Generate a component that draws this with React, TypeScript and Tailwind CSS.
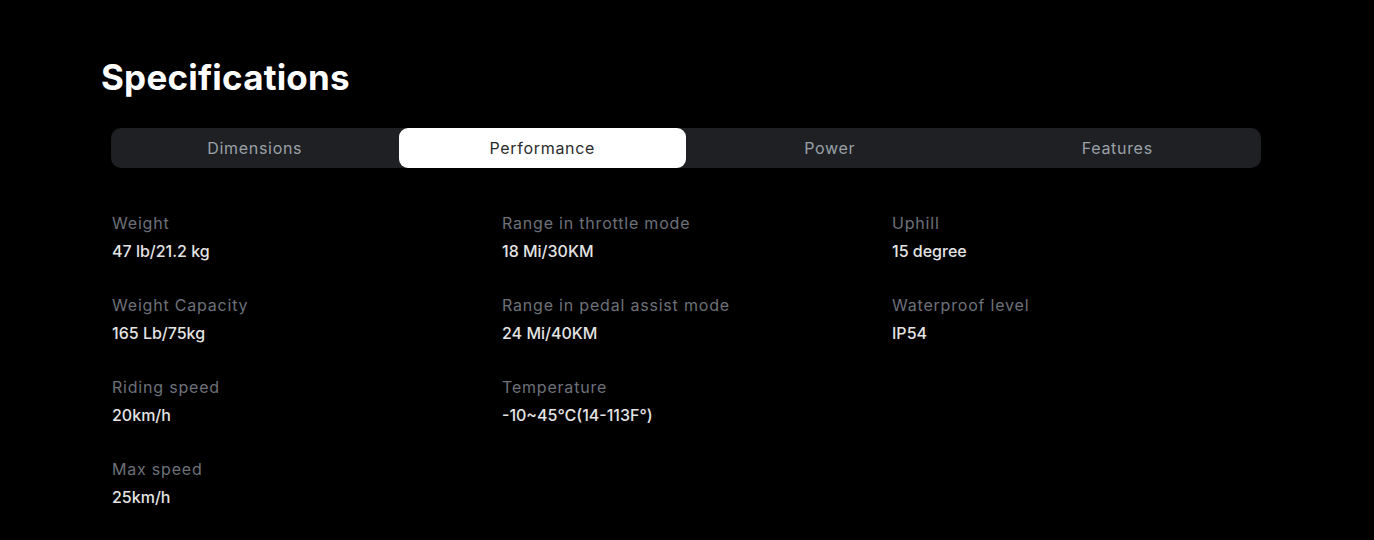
import { useState } from "react";

const tabs = ["Dimensions", "Performance", "Power", "Features"];

const columns = [
  [
    { label: "Weight", value: "47 lb/21.2 kg" },
    { label: "Weight Capacity", value: "165 Lb/75kg" },
    { label: "Riding speed", value: "20km/h" },
    { label: "Max speed", value: "25km/h" },
  ],
  [
    { label: "Range in throttle mode", value: "18 Mi/30KM" },
    { label: "Range in pedal assist mode", value: "24 Mi/40KM" },
    { label: "Temperature", value: "-10~45℃(14-113F°)" },
  ],
  [
    { label: "Uphill", value: "15 degree" },
    { label: "Waterproof level", value: "IP54" },
  ],
];

export default function App() {
  const [active, setActive] = useState("Performance");

  return (
    <div className="flex min-h-[540px] w-full bg-black font-['Inter',sans-serif]">
      <div className="flex-1 px-[101px] pt-[56px]">
        <h2 className="text-[35px] font-bold leading-[43px] tracking-[0.2px] text-white">
          Specifications
        </h2>

        <div className="ml-[10px] mt-[29px]">
          <div className="grid h-10 w-[1150px] grid-cols-4 rounded-[10px] bg-[#1e2024]">
            {tabs.map((tab) => (
              <button
                key={tab}
                onClick={() => setActive(tab)}
                className={
                  tab === active
                    ? "rounded-[9px] bg-white pb-px text-[16px] tracking-[0.7px] text-[#2a2a2a]"
                    : "pb-px text-[16px] tracking-[0.7px] text-[#9ba0a7]"
                }
              >
                {tab}
              </button>
            ))}
          </div>

          <div className="mt-[43px] grid grid-cols-[390px_390px_390px] pl-[1px]">
            {columns.map((items, i) => (
              <div key={i} className="flex flex-col gap-[30px]">
                {items.map((item) => (
                  <div key={item.label} className="flex flex-col gap-1">
                    <span className="text-[16px] leading-6 tracking-[0.8px] text-[#6d7179]">
                      {item.label}
                    </span>
                    <span className="text-[16px] font-medium leading-6 text-[#e4e4e4]">
                      {item.value}
                    </span>
                  </div>
                ))}
              </div>
            ))}
          </div>
        </div>
      </div>

      {/* scrollbar strip */}
      <div className="flex w-[3px] flex-col">
        <div className="h-[123px] bg-[#ececec]" />
        <div className="h-[134px] bg-[#b8b8b8]" />
      </div>
    </div>
  );
}
